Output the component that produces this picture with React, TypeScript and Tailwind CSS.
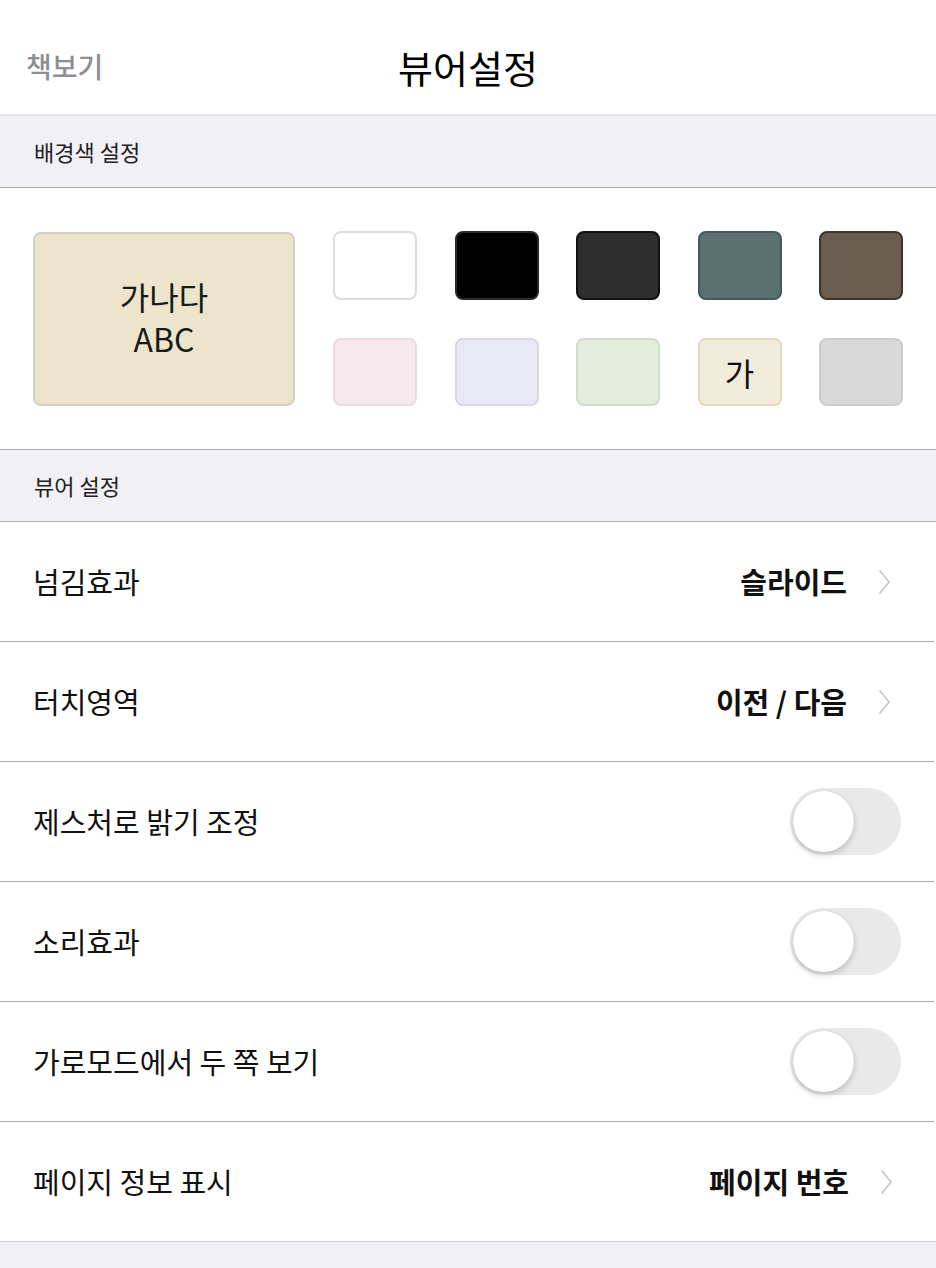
const topSwatches = [
  { bg: 'bg-[#ffffff]', border: 'border-[#dcdcdc]' },
  { bg: 'bg-[#000000]', border: 'border-[#2a2a2a]' },
  { bg: 'bg-[#2e2e2e]', border: 'border-[#111111]' },
  { bg: 'bg-[#5a7170]', border: 'border-[#435857]' },
  { bg: 'bg-[#6a5d4f]', border: 'border-[#3e362e]' },
];

const bottomSwatches = [
  { bg: 'bg-[#f5e9ed]', border: 'border-[#ebdbe0]', label: '' },
  { bg: 'bg-[#e9e9f3]', border: 'border-[#d8d8e2]', label: '' },
  { bg: 'bg-[#e3ecdd]', border: 'border-[#cfdcc8]', label: '' },
  { bg: 'bg-[#f1ebd9]', border: 'border-[#e3d9bd]', label: '가' },
  { bg: 'bg-[#d8d8d8]', border: 'border-[#cdcdcd]', label: '' },
];

type Row =
  | { label: string; kind: 'value'; value: string }
  | { label: string; kind: 'toggle' };

const rows: Row[] = [
  { label: '넘김효과', kind: 'value', value: '슬라이드' },
  { label: '터치영역', kind: 'value', value: '이전 / 다음' },
  { label: '제스처로 밝기 조정', kind: 'toggle' },
  { label: '소리효과', kind: 'toggle' },
  { label: '가로모드에서 두 쪽 보기', kind: 'toggle' },
  { label: '페이지 정보 표시', kind: 'value', value: '페이지 번호' },
];

function Toggle() {
  return (
    <div className="w-[111px] h-[67px] rounded-full bg-[#e9e9ea] p-[3px] flex items-center">
      <div className="w-[61px] h-[61px] rounded-full bg-white shadow-[0_3px_6px_rgba(0,0,0,0.18),0_0_1px_rgba(0,0,0,0.2)]" />
    </div>
  );
}

function Chevron() {
  return (
    <svg className="ml-[30px] mr-[10px]" width="14" height="28" viewBox="0 0 14 28" fill="none">
      <polyline points="3,3 12,14 3,25" stroke="#c4c4c7" strokeWidth="1.6" strokeLinecap="round" strokeLinejoin="round" />
    </svg>
  );
}

function SectionHeader({ title }: { title: string }) {
  return (
    <div className="h-[72px] bg-[#f0f0f5] border-b border-[#ababab] flex items-center px-[34px]">
      <span className="text-[22px] text-[#222]">{title}</span>
    </div>
  );
}

export default function App() {
  return (
    <div className="w-[936px] h-[1268px] bg-[#f0f0f5] overflow-hidden font-['Noto_Sans_CJK_KR','Noto_Sans',sans-serif]">
      {/* Header */}
      <header className="h-[116px] pt-[18px] bg-white border-b-2 border-[#e3e3e6] flex items-center relative">
        <span className="pl-[26px] text-[28px] text-[#8e8e93] font-medium">책보기</span>
        <h1 className="absolute left-1/2 -translate-x-1/2 text-[38px] text-black">뷰어설정</h1>
      </header>

      <SectionHeader title="배경색 설정" />

      {/* Background colours */}
      <div className="h-[262px] bg-white border-b border-[#ababab] flex items-center pl-[33px]">
        <div className="w-[262px] h-[174px] rounded-[8px] bg-[#ece5cc] border-2 border-[#d4d1c0] flex flex-col items-center justify-center text-[32px] leading-[42px] text-[#1a1a1a] pb-[4px]">
          <span>가나다</span>
          <span>ABC</span>
        </div>
        <div className="ml-[38px] flex flex-col gap-[38px]">
          <div className="flex gap-[37.5px]">
            {topSwatches.map((s, i) => (
              <div key={i} className={`w-[84px] h-[69px] rounded-[8px] border-2 ${s.bg} ${s.border}`} />
            ))}
          </div>
          <div className="flex gap-[37.5px]">
            {bottomSwatches.map((s, i) => (
              <div key={i} className={`w-[84px] h-[68px] rounded-[8px] border-2 ${s.bg} ${s.border} flex items-center justify-center text-[32px] text-[#111]`}>
                {s.label}
              </div>
            ))}
          </div>
        </div>
      </div>

      <SectionHeader title="뷰어 설정" />

      {/* Viewer options */}
      <div className="bg-white">
        {rows.map((r, i) => (
          <div
            key={r.label}
            className={`h-[120px] flex items-center pl-[33px] pr-[33px] border-b ${i === rows.length - 1 ? 'border-[#d0d0d4]' : 'border-[#ababab] mr-[2px]'}`}
          >
            <span className="flex-1 text-[29px] text-[#111]">{r.label}</span>
            {r.kind === 'value' ? (
              <div className="flex items-center">
                <span className="text-[29px] font-bold text-[#111]">{r.value}</span>
                <Chevron />
              </div>
            ) : (
              <Toggle />
            )}
          </div>
        ))}
      </div>
    </div>
  );
}
